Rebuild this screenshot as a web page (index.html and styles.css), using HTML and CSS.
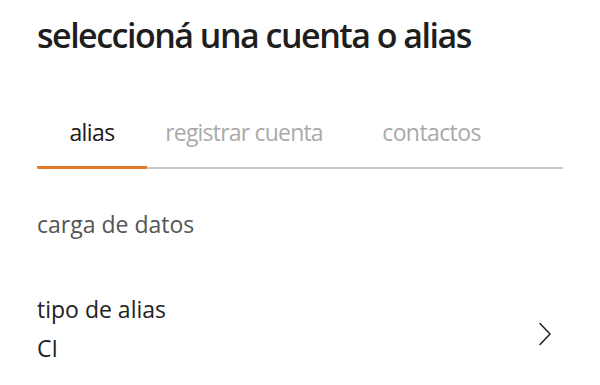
FILE: index.html
```html
<!DOCTYPE html>
<html lang="es">
<head>
<meta charset="utf-8">
<link rel="stylesheet" href="styles.css">
</head>
<body>
<main class="page">
  <h1 class="title">seleccioná una cuenta o alias</h1>
  <nav class="tabs">
    <div class="tab tab-alias active">alias</div>
    <div class="tab tab-registrar">registrar cuenta</div>
    <div class="tab tab-contactos">contactos</div>
  </nav>
  <p class="section">carga de datos</p>
  <div class="field">
    <div class="field-text">
      <div class="field-label">tipo de alias</div>
      <div class="field-value">CI</div>
    </div>
    <svg class="chevron" width="14" height="24" viewBox="0 0 14 24">
      <path d="M2 1.5 L12 12 L2 22.5" fill="none" stroke="#222" stroke-width="1.5" stroke-linecap="round" stroke-linejoin="round"/>
    </svg>
  </div>
</main>
</body>
</html>
```
FILE: styles.css
```css
html, body {
  margin: 0;
  padding: 0;
  background: #fff;
}
.page {
  padding: 15px 37px 0 37px;
  font-family: "Open Sans", "Noto Sans", sans-serif;
  color: #222;
}
.title {
  margin: 0;
  font-size: 34px;
  font-weight: 600;
  letter-spacing: -1.5px;
  line-height: 40px;
  color: #1e1e1e;
}
.tabs {
  display: flex;
  margin-top: 62px;
  border-bottom: 2px solid #c8c8c8;
}
.tab {
  font-size: 23px;
  line-height: 30px;
  padding-bottom: 19px;
  text-align: center;
  color: #aaa;
  letter-spacing: -0.6px;
  margin-bottom: -2px;
}
.tab-alias {
  width: 110px;
}
.tab-registrar {
  width: 194px;
  letter-spacing: -0.8px;
}
.tab-contactos {
  width: 181px;
}
.tab.active {
  color: #1a1a1a;
  border-bottom: 3px solid #e07b2a;
  border-radius: 2px;
}
.section {
  margin: 40px 0 0 0;
  font-size: 23px;
  line-height: 30px;
  color: #555;
}
.field {
  display: flex;
  align-items: flex-start;
  justify-content: space-between;
  margin-top: 55px;
}
.field-label {
  font-size: 23px;
  line-height: 30px;
  color: #222;
}
.field-value {
  font-size: 23px;
  line-height: 30px;
  margin-top: 9px;
  color: #222;
}
.chevron {
  margin-top: 28px;
  margin-right: 11px;
}
```
